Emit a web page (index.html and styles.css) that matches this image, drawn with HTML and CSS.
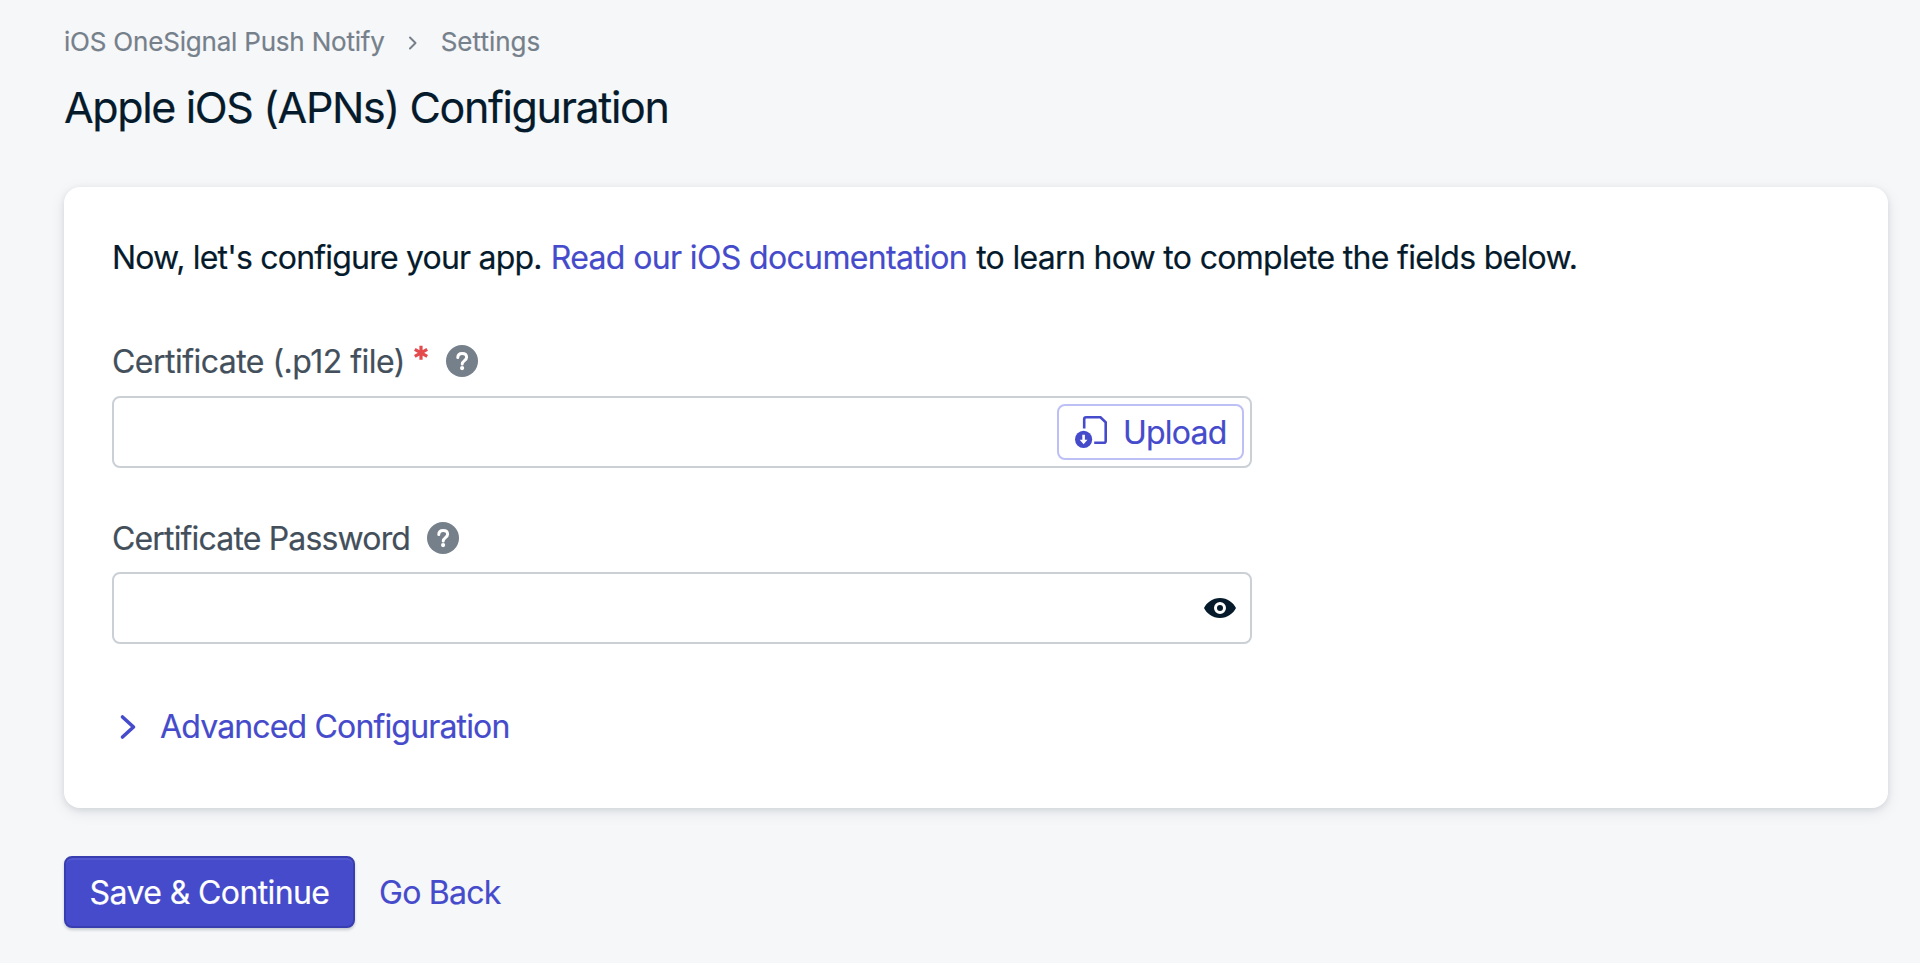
FILE: index.html
```html
<!DOCTYPE html>
<html lang="en">
<head>
<meta charset="utf-8">
<title>Apple iOS (APNs) Configuration</title>
<link rel="stylesheet" href="styles.css">
</head>
<body>
<main class="page">
  <nav class="breadcrumb">
    <a class="crumb crumb-app">iOS OneSignal Push Notify</a>
    <svg class="crumb-sep" width="10" height="14" viewBox="0 0 10 14"><path d="M2 1.5 7.5 7 2 12.5"/></svg>
    <a class="crumb crumb-page">Settings</a>
  </nav>
  <h1 class="title">Apple iOS (APNs) Configuration</h1>
  <section class="card">
    <p class="intro"><span class="intro-lead">Now, let's configure your app.</span> <a class="link intro-link">Read our iOS documentation</a> <span class="intro-tail">to learn how to complete the fields below.</span></p>
    <div class="label-row">
      <label class="label label-file">Certificate (.p12 file)</label>
      <svg class="required" width="14" height="16" viewBox="0 0 14 16"><path d="M7 .8v14M.8 4.300l12.400 7M13.200 4.300l-12.400 7"/></svg>
      <svg class="help" width="32" height="32" viewBox="0 0 32 32"><circle cx="16" cy="16" r="16"/><path d="M11.8 12.6c0-2.6 1.8-4.2 4.4-4.2s4.4 1.5 4.4 3.8c0 3.5-4.4 3.3-4.4 6.9"/><circle class="help-dot" cx="16.1" cy="23.1" r="2.1"/></svg>
    </div>
    <div class="field field-file">
      <button class="upload">
        <svg width="32" height="32" viewBox="0 0 32 32"><path class="sheet" d="M9.200 12.500V3.300Q9.200 1.300 11.200 1.300h14.300L30.700 6.300v18.600Q30.700 26.700 28.900 26.700h-9.700"/><circle cx="8.6" cy="23.4" r="8.6"/><path class="arrow" d="M7.3 18.8h2.6v5h2.6l-3.9 4.4-3.9-4.4h2.6z"/></svg>
        <span class="upload-text">Upload</span>
      </button>
    </div>
    <div class="label-row">
      <label class="label label-password">Certificate Password</label>
      <svg class="help" width="32" height="32" viewBox="0 0 32 32"><circle cx="16" cy="16" r="16"/><path d="M11.8 12.6c0-2.6 1.8-4.2 4.4-4.2s4.4 1.5 4.4 3.8c0 3.5-4.4 3.3-4.4 6.9"/><circle class="help-dot" cx="16.1" cy="23.1" r="2.1"/></svg>
    </div>
    <div class="field field-password">
      <svg class="eye" width="32" height="20" viewBox="0 0 32 20"><path fill-rule="evenodd" d="M16 0C8.6 0 2.800 4.500 0 10c2.800 5.500 8.600 10 16 10s13.200-4.500 16-10C29.200 4.500 23.400 0 16 0zm0 4a6 6 0 1 1 0 12 6 6 0 0 1 0-12z"/><circle cx="16" cy="10" r="3"/></svg>
    </div>
    <a class="link advanced">
      <svg width="18" height="26" viewBox="0 0 18 26"><path d="M3.500 3 14.500 13 3.500 23"/></svg>
      <span class="advanced-text">Advanced Configuration</span>
    </a>
  </section>
  <div class="actions">
    <button class="save"><span class="save-text">Save &amp; Continue</span></button>
    <a class="link back">Go Back</a>
  </div>
</main>
</body>
</html>
```
FILE: styles.css
```css
* { box-sizing: border-box; }
body {
  margin: 0;
  height: 963px;
  background: #f6f7f9;
  color: #051b2c;
  font-family: Inter, "Liberation Sans", sans-serif;
  font-size: 32px;
  line-height: 48px;
  -webkit-text-stroke: .2px currentColor;
}
svg { display: block; flex: none; }
.page { padding: 22px 32px 0 64px; }
.breadcrumb {
  display: flex;
  align-items: center;
  height: 40px;
  color: #75808b;
  font-size: 26px;
  line-height: 40px;
  white-space: nowrap;
}
.crumb-app { letter-spacing: -.2px; }
.crumb-sep { margin: 2px 23px 0 23px; fill: none; stroke: #75808b; stroke-width: 2; stroke-linecap: round; stroke-linejoin: round; }
.title {
  margin: 17px 0 0;
  height: 56px;
  font-size: 43px;
  line-height: 56px;
  font-weight: 400;
  letter-spacing: -1.36px;
  white-space: nowrap;
}
.card {
  margin-top: 52px;
  height: 621px;
  padding: 47px 48px 0;
  border-radius: 16px;
  background: #fff;
  box-shadow: 0 2px 6px rgba(5, 27, 44, .1), 0 4px 16px rgba(5, 27, 44, .08);
}
.intro { margin: 0; white-space: nowrap; }
.intro-lead { letter-spacing: -.8px; }
.intro-link { letter-spacing: -.64px; }
.intro-tail { letter-spacing: -.69px; }
.link { color: #454bcb; }
.label-row { display: flex; align-items: center; height: 48px; white-space: nowrap; }
.intro + .label-row { margin-top: 55px; }
.label { padding-top: 2px; color: #434f5b; }
.label-file { letter-spacing: -.53px; }
.label-password { letter-spacing: -.84px; }
.required { margin: -17px 0 0 9px; fill: none; stroke: #e54b4d; stroke-width: 3.2; }
.help { margin-left: 18px; fill: #75808b; }
.label-password + .help { margin-left: 17px; }
.help path { fill: none; stroke: #fff; stroke-width: 3; stroke-linecap: round; }
.help .help-dot { fill: #fff; }
.field {
  display: flex;
  align-items: center;
  justify-content: flex-end;
  width: 1140px;
  height: 72px;
  margin-top: 11px;
  border: 2px solid #cbd0d6;
  border-radius: 8px;
}
.field-file { margin-bottom: 46px; padding-right: 6px; }
.field-password { margin-top: 10px; padding-right: 14px; }
.upload {
  display: flex;
  align-items: center;
  width: 187px;
  height: 56px;
  padding: 0 0 0 16px;
  gap: 16px;
  border: 2px solid #bdc0f5;
  border-radius: 8px;
  background: #fff;
  color: #454bcb;
  font: inherit;
}
.upload-text { padding-top: 2px; letter-spacing: -.8px; }
.upload svg { fill: #454bcb; }
.upload .sheet { fill: none; stroke: #454bcb; stroke-width: 2.6; }
.upload .arrow { fill: #fff; }
.eye { fill: #051b2c; }
.advanced { display: flex; align-items: center; height: 48px; margin-top: 59px; padding-left: 7px; gap: 23px; white-space: nowrap; letter-spacing: -.84px; }
.advanced svg { fill: none; stroke: #454bcb; stroke-width: 3.6; stroke-linecap: round; stroke-linejoin: round; }
.actions { display: flex; align-items: center; gap: 24px; margin-top: 48px; white-space: nowrap; }
.save {
  width: 291px;
  height: 72px;
  padding: 2px 0 0;
  border: 2px solid #383eb0;
  border-radius: 8px;
  background: #454bcb;
  box-shadow: 0 2px 3px rgba(5, 27, 44, .2), inset 0 2px 0 #5258cf;
  color: #fff;
  font: inherit;
  letter-spacing: -.6px;
}
.back { padding-top: 2px; letter-spacing: -.75px; }
```
